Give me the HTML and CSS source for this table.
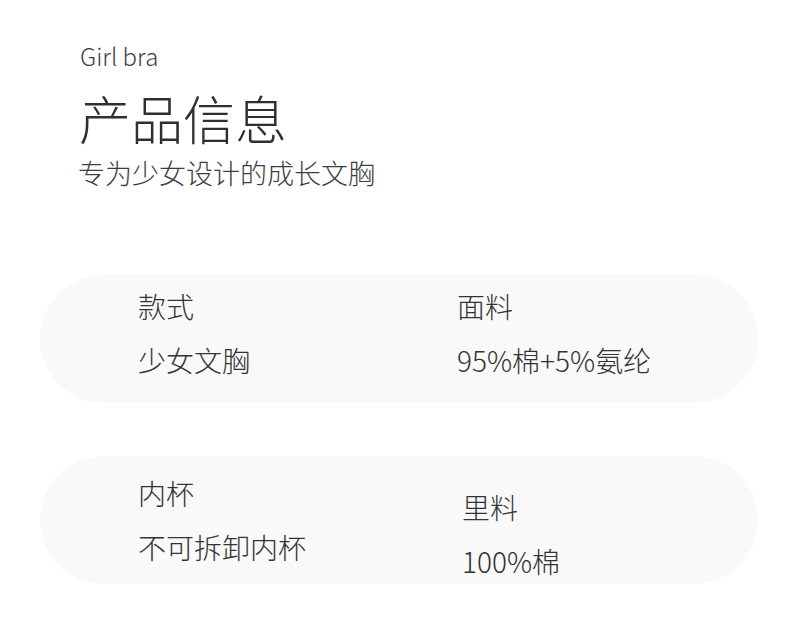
FILE: index.html
```html
<!DOCTYPE html>
<html lang="zh-CN">
<head>
<meta charset="utf-8">
<title>产品信息</title>
<link rel="stylesheet" href="styles.css">
</head>
<body>
<div class="page">
  <header class="header">
    <div class="eyebrow">Girl bra</div>
    <h1 class="title">产品信息</h1>
    <p class="subtitle">专为少女设计的成长文胸</p>
  </header>
  <section class="card card-one">
    <div class="col col-left">
      <div class="label">款式</div>
      <div class="value">少女文胸</div>
    </div>
    <div class="col col-right">
      <div class="label">面料</div>
      <div class="value">95%棉+5%氨纶</div>
    </div>
  </section>
  <section class="card card-two">
    <div class="col col-left">
      <div class="label">内杯</div>
      <div class="value">不可拆卸内杯</div>
    </div>
    <div class="col col-right shifted">
      <div class="label">里料</div>
      <div class="value">100%棉</div>
    </div>
  </section>
</div>
</body>
</html>
```
FILE: styles.css
```css
* { box-sizing: border-box; }
html, body { margin: 0; padding: 0; background: #ffffff; }
body {
  font-family: "Noto Sans CJK SC", "Noto Sans", sans-serif;
  font-weight: 300;
  color: #333;
  width: 790px;
  height: 624px;
  overflow: hidden;
}
.page { padding-top: 40px; }
.header { padding-left: 79px; }
.eyebrow {
  font-size: 24px;
  line-height: 32px;
  color: #3d3d3d;
  padding-left: 1px;
}
.title {
  margin: 14px 0 0;
  font-weight: 300;
  font-size: 52px;
  line-height: 64px;
  color: #2f2f2f;
}
.subtitle {
  margin: 5px 0 0 -1px;
  font-size: 27px;
  line-height: 36px;
  color: #3d3d3d;
}
.card {
  margin-left: 40px;
  width: 718px;
  height: 128px;
  border-radius: 64px;
  background: #f9f9f9;
  display: flex;
  padding-left: 98px;
}
.card-one { margin-top: 84px; padding-top: 12px; }
.card-two { margin-top: 53px; padding-top: 18px; }
.col { display: flex; flex-direction: column; gap: 16px; }
.col-left { width: 319px; }
.card-two .col-left { width: 324px; }
.shifted { padding-top: 14px; }
.label, .value {
  font-size: 28px;
  line-height: 38px;
  color: #333;
  white-space: nowrap;
}
```
